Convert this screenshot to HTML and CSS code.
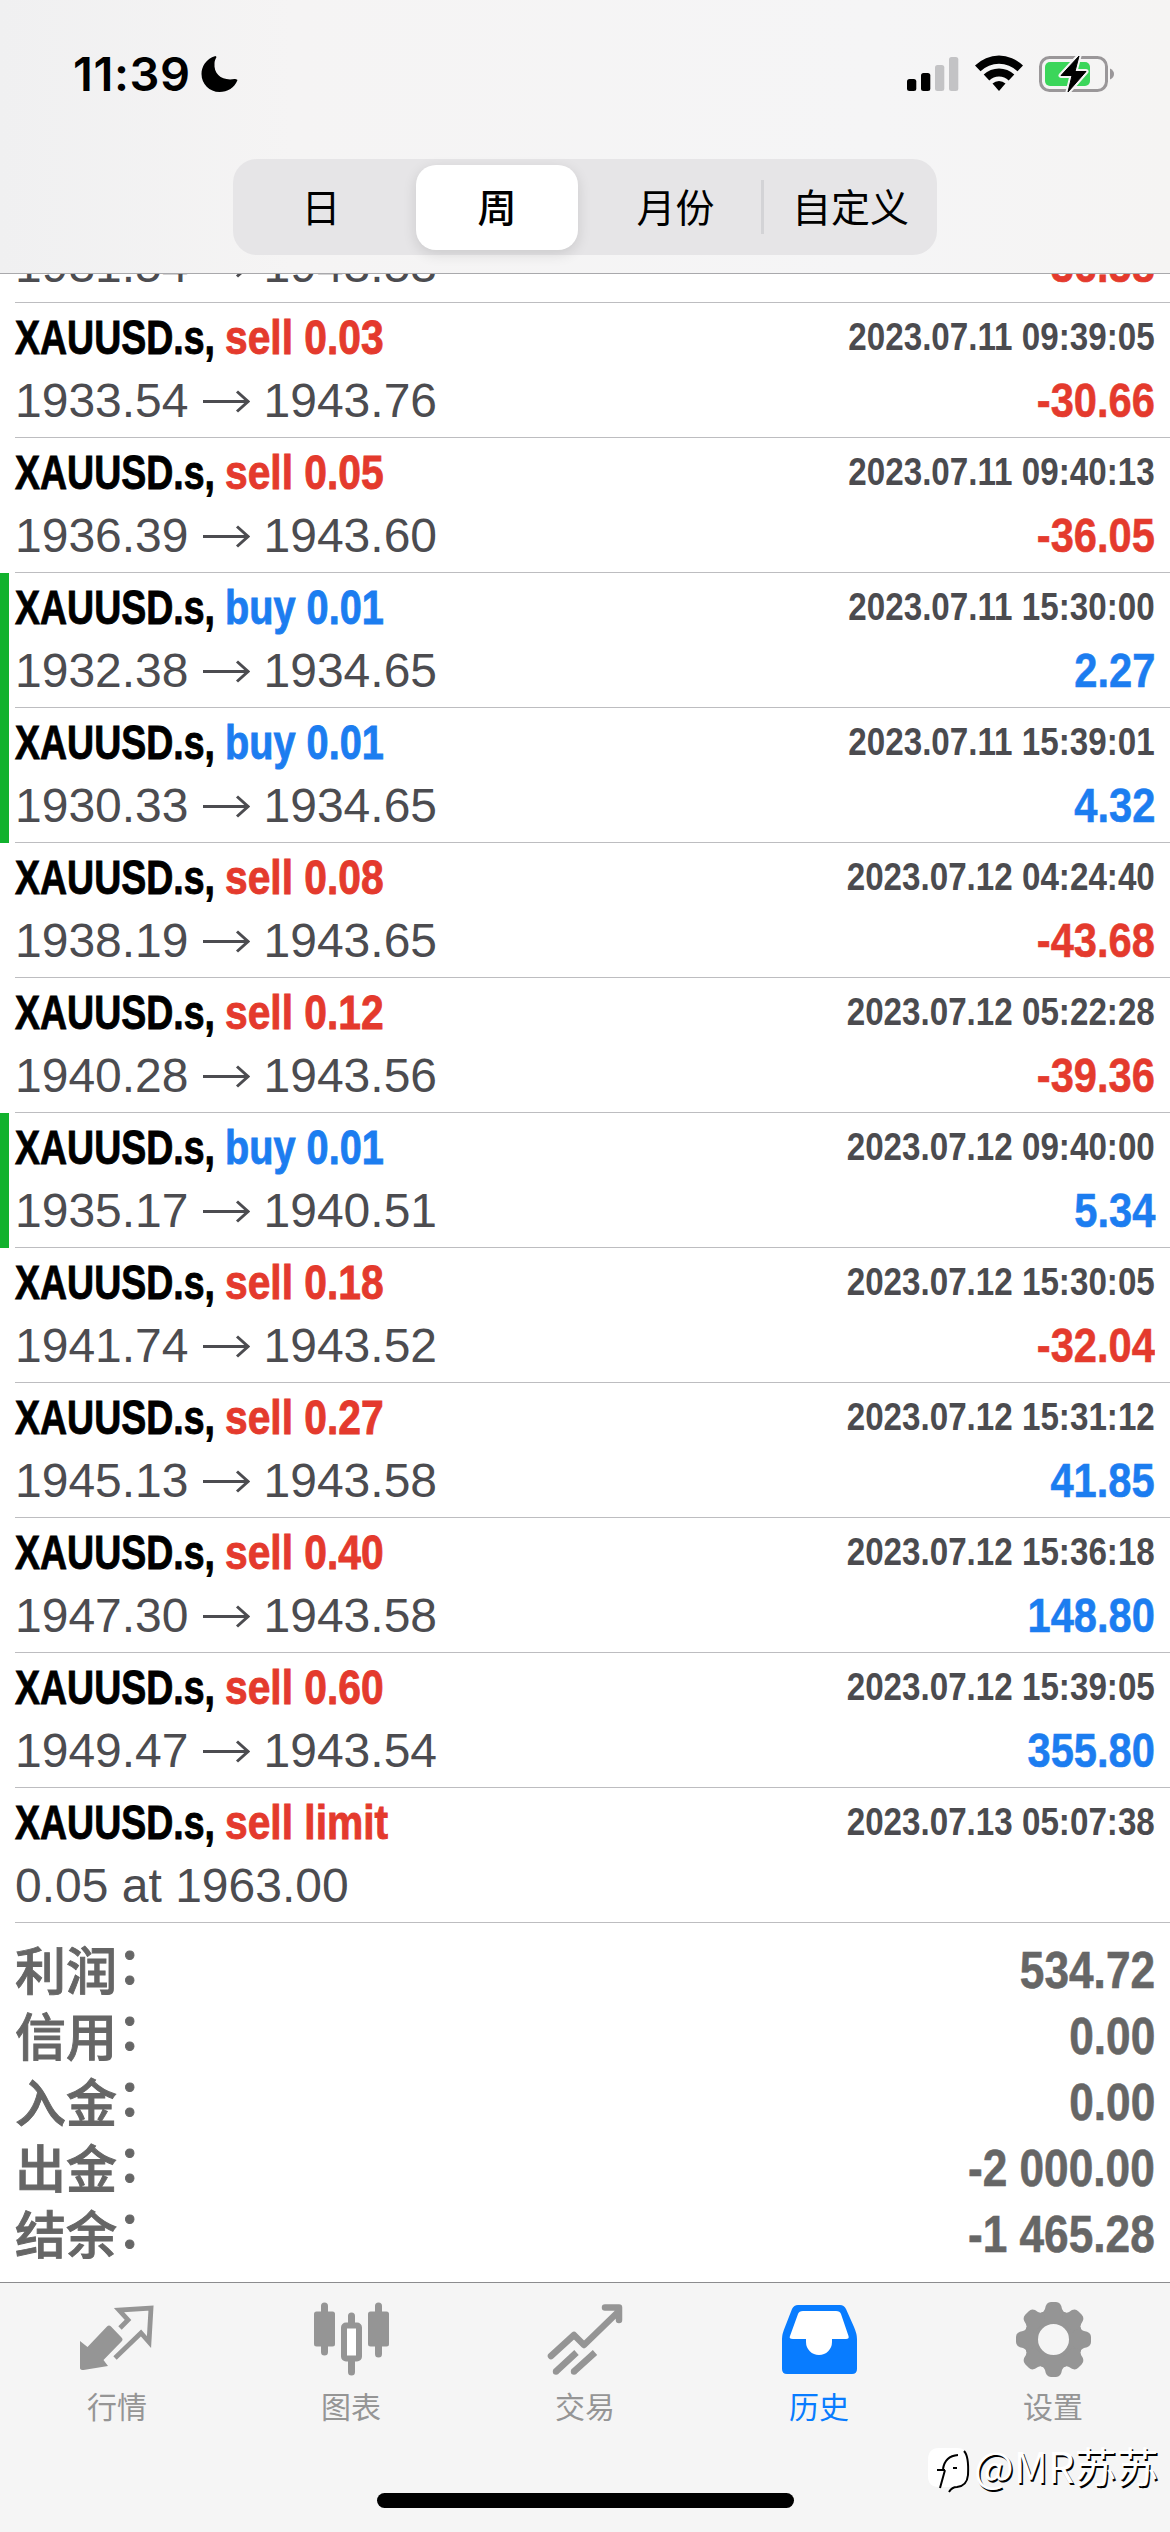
FILE: index.html
```html
<!DOCTYPE html>
<html lang="zh-CN">
<head>
<meta charset="utf-8">
<title>历史</title>
<link rel="stylesheet" href="styles.css">
</head>
<body>
<div class="app">
  <header class="header">
    <div class="status">
      <div class="status-left">
        <span class="time">11:39</span>
        <svg class="moon" viewBox="0 0 36 36"><path d="M14 0C4 3 0 11 0 18c0 10 8 18 18 18 8 0 15-4 18-12-1-1-2-1-3-1-12 2-21-4-20-16 0-2 1-4 2-6z"/></svg>
      </div>
      <div class="status-right">
        <svg class="signal" viewBox="0 0 52 36"><rect x="0" y="23" width="9.3" height="12" rx="2.5"/><rect x="14" y="17" width="9.3" height="18" rx="2.5"/><g fill="#c3c3c5"><rect x="28" y="9" width="9.3" height="26" rx="2.5"/><rect x="42" y="1" width="9.3" height="34" rx="2.5"/></g></svg>
        <svg class="wifi" viewBox="0 0 48 36"><path d="M0 10.5a34 34 0 0 1 48 0l-5.5 5.8a26.500 26.500 0 0 0-37 0z"/><path d="M8.700 19.600a22 22 0 0 1 30.600 0l-5.600 5.800a14 14 0 0 0-19.400 0z"/><path d="M17.500 28.500a9.500 9.500 0 0 1 13 0L24 36z"/></svg>
        <svg class="battery" viewBox="0 0 76 38"><rect x="1.500" y="2.500" width="66" height="33" rx="9" fill="none" stroke="#9a9799" stroke-width="3"/><path d="M71 13.500q4 2 4 5.500t-4 5.500z" fill="#9a9799"/><rect x="6" y="7" width="45" height="24" rx="5" fill="#3bd65a"/><path d="M40 1 22 20.500h11L29 37l18-20.500H36z" stroke="#f5f5f5" stroke-width="5" stroke-linejoin="round" fill="#f5f5f5"/><path d="M40 1 22 20.500h11L29 37l18-20.500H36z" stroke="#000" stroke-width="1" stroke-linejoin="round"/></svg>
      </div>
    </div>
    <nav class="segments">
      <span class="segment">日</span>
      <span class="segment selected">周</span>
      <span class="segment month">月份</span>
      <span class="segment divided">自定义</span>
    </nav>
  </header>
  <main class="history" id="history"></main>
  <footer class="tabbar">
    <nav class="tabs">
      <a class="tab"><svg viewBox="0 0 76 76"><path d="M1 37 8.500 43 28 22.500q2-2 4 0l10.500 11q2 2 0 4L24.500 56l4.500 6-24.500 4Q1 66 1 64z"/><path d="m41 24 8-8-9-10 32-2-2 34-8-9-26 25" fill="none" stroke="currentColor" stroke-width="4.800"/></svg><span>行情</span></a>
      <a class="tab"><svg viewBox="0 0 76 76"><g stroke="currentColor" stroke-width="7" stroke-linecap="round"><path d="M11.500 2v46M65.500 2v48M38.500 12v14M38.500 56v12"/></g><rect x="1" y="7.500" width="21" height="35" rx="2.500"/><rect x="55" y="7.500" width="21" height="35" rx="2.500"/><rect x="31" y="21.500" width="15" height="33" rx="2" fill="#fff" stroke="currentColor" stroke-width="6"/></svg><span>图表</span></a>
      <a class="tab"><svg viewBox="0 0 76 76"><path d="m4 52 23-21 10 10L70 9M58 3.500h14V16" fill="none" stroke="currentColor" stroke-width="6.500" stroke-linecap="round" stroke-linejoin="round"/><path d="m9.500 67 20-18.500M27.500 67 48 48.500" fill="none" stroke="currentColor" stroke-width="6.500"/><circle cx="9" cy="67.500" r="3.200"/><circle cx="27" cy="67.500" r="3.200"/></svg><span>交易</span></a>
      <a class="tab active"><svg viewBox="0 0 76 76"><path d="M17 1h42q4 0 6 4l8 18q3 7 3 12v30q0 5-5 5H6q-5 0-5-5V35q0-5 3-12l7-18q2-4 6-4z"/><path d="M22 7h33q4 0 5 3l7.500 22q1 3-2.500 3H51v3a13 13 0 0 1-26 0v-3H12q-4.500 0-3-3l8-22q1-3 5-3z" fill="#fff"/></svg><span>历史</span></a>
      <a class="tab"><svg viewBox="0 0 76 76"><circle cx="38.500" cy="35.500" r="22.500" fill="none" stroke="currentColor" stroke-width="14"/><g id="teeth"></g></svg><span>设置</span></a>
    </nav>
    <div class="home"></div>
    <div class="watermark"><svg viewBox="0 0 44 48"><path d="M12 2h18q11 0 11 12v16q0 11-10 11l-8 5 2-5H12Q1 41 1 30V14Q1 2 12 2z" fill="#fff"/><path d="M37 5q5 5 4 24-1 11-11 12-5 0-8 5M13 42l5-18M10 24h8M16 23q2-13 15-14M26 22h4" fill="none" stroke="#000" stroke-width="2"/></svg><span>@MR苏苏</span></div>
  </footer>
</div>
<script src="app.js"></script>
</body>
</html>
```
FILE: styles.css
```css
* { box-sizing: border-box; }
body { margin: 0; background: #fff; font-family: "Liberation Sans", "Noto Sans CJK SC", sans-serif; }
.app { width: 1170px; height: 2532px; display: flex; flex-direction: column; overflow: hidden; }

.header { height: 274px; flex: none; background: linear-gradient(90deg, #f0f0f1, #f5f4f4 25%, #f5f5f6 75%, #f5f4f3); border-bottom: 1px solid #a9a9ac; display: flex; flex-direction: column; align-items: center; }
.status { width: 100%; height: 159px; padding: 55px 55px 0 73px; display: flex; justify-content: space-between; }
.status-left { display: flex; gap: 11px; height: 37px; align-items: center; }
.time { width: 117px; font: 600 47px/37px Inter, sans-serif; letter-spacing: 0.6px; white-space: nowrap; }
.moon { width: 37px; height: 36px; }
.status-right { display: flex; height: 37px; gap: 16px; }
.signal { width: 52px; height: 36px; margin-top: 1px; }
.wifi { width: 48px; height: 36px; }
.battery { width: 76px; height: 38px; }
.segments { width: 704px; height: 96px; border-radius: 24px; background: #e6e5e7; display: grid; grid-template-columns: repeat(4, 1fr); align-items: center; }
.segment { height: 85px; margin: 0 7px; padding-bottom: 4px; display: flex; align-items: center; justify-content: center; font: 400 39px/81px "Noto Sans CJK SC", sans-serif; white-space: nowrap; }
.month { padding-left: 5px; }
.selected { background: #fff; border-radius: 20px; font-weight: 500; box-shadow: 0 4px 14px rgba(0, 0, 0, .12); }
.divided { margin: 0; height: 54px; border-left: 3px solid #d3d3d6; }

.history { flex: 1; min-height: 0; overflow: hidden; display: flex; flex-direction: column; justify-content: flex-end; }
.deal { flex: none; height: 135px; position: relative; padding: 9px 15px 0 15px; }
.deal::after { content: ""; position: absolute; left: 15px; right: 0; bottom: 0; height: 1px; background: #bdbdc0; }
.closed-tp::before { content: ""; position: absolute; left: 0; top: 0; bottom: 0; width: 9px; background: #12b22e; }
.line { display: flex; justify-content: space-between; height: 63px; line-height: 50px; white-space: nowrap; }
.title { display: flex; font-weight: 700; font-size: 49px; line-height: 51px; -webkit-text-stroke: .9px currentColor; }
.symbol { width: 210px; }
.symbol span, .action span { display: inline-block; transform-origin: 0 50%; }
.symbol span { transform: scaleX(.765); }
.action.red span { transform: scaleX(.832); }
.action.blue span { transform: scaleX(.81); }
.date { font-size: 39.500px; line-height: 49px; font-weight: 700; color: #4b4b4f; transform: scaleX(.84); transform-origin: 100% 50%; }
.prices { display: flex; font-size: 48px; line-height: 51px; color: #4c4c50; }
.prices svg { width: 48px; height: 51px; margin: 0 14px 0 13px; }
.profit { font-size: 49px; line-height: 51px; font-weight: 700; transform: scaleX(.85); transform-origin: 100% 50%; -webkit-text-stroke: .6px currentColor; }
.red { color: #e43a2d; }
.blue { color: #1c7df0; }

.summary { flex: none; height: 359px; padding: 13px 15px 0 15px; color: #666; }
.total { display: flex; justify-content: space-between; height: 66px; line-height: 66px; font-size: 52px; white-space: nowrap; }
.label { font: 500 51px/64px "Noto Sans CJK SC", sans-serif; -webkit-text-stroke: .9px currentColor; }
.colon { display: inline-block; transform: translateY(-6px); }
.amount { font-weight: 700; line-height: 69px; transform: scaleX(.85); transform-origin: 100% 50%; -webkit-text-stroke: .6px currentColor; }

.tabbar { height: 250px; flex: none; background: #f5f5f5; border-top: 1px solid #8c8c8e; position: relative; display: flex; flex-direction: column; align-items: center; }
.tabs { width: 100%; height: 210px; display: grid; grid-template-columns: repeat(5, 1fr); }
.tab { padding-top: 21px; display: flex; flex-direction: column; align-items: center; color: #959595; font: 400 30px/40px "Noto Sans CJK SC", sans-serif; }
.tab svg { width: 76px; height: 76px; margin-bottom: 5px; fill: currentColor; overflow: visible; }
.active { color: #087cff; }
.home { width: 417px; height: 15px; border-radius: 8px; background: #000; }
.watermark { position: absolute; left: 927px; top: 152px; display: flex; align-items: center; height: 60px; color: #fff; font: 400 42px/60px "Noto Sans CJK SC", sans-serif; text-shadow: 1.500px 1.500px 0 #000; white-space: nowrap; }
.watermark svg { width: 44px; height: 48px; margin: 10px 3px 0 0; }
```
FILE: app.js
```js
const deals = [
  ["sell 0.03", "2023.07.11 09:35:06", "1931.54", "1943.53", "-36.58"],
  ["sell 0.03", "2023.07.11 09:39:05", "1933.54", "1943.76", "-30.66"],
  ["sell 0.05", "2023.07.11 09:40:13", "1936.39", "1943.60", "-36.05"],
  ["buy 0.01", "2023.07.11 15:30:00", "1932.38", "1934.65", "2.27"],
  ["buy 0.01", "2023.07.11 15:39:01", "1930.33", "1934.65", "4.32"],
  ["sell 0.08", "2023.07.12 04:24:40", "1938.19", "1943.65", "-43.68"],
  ["sell 0.12", "2023.07.12 05:22:28", "1940.28", "1943.56", "-39.36"],
  ["buy 0.01", "2023.07.12 09:40:00", "1935.17", "1940.51", "5.34"],
  ["sell 0.18", "2023.07.12 15:30:05", "1941.74", "1943.52", "-32.04"],
  ["sell 0.27", "2023.07.12 15:31:12", "1945.13", "1943.58", "41.85"],
  ["sell 0.40", "2023.07.12 15:36:18", "1947.30", "1943.58", "148.80"],
  ["sell 0.60", "2023.07.12 15:39:05", "1949.47", "1943.54", "355.80"],
  ["sell limit", "2023.07.13 05:07:38", "0.05 at 1963.00", null, ""]
];
const totals = [["利润", "534.72"], ["信用", "0.00"], ["入金", "0.00"], ["出金", "-2 000.00"], ["结余", "-1 465.28"]];
const arrow = '<svg viewBox="0 0 48 51"><path d="M1 26.500h45M35 16.500l11 10-11 10" fill="none" stroke="currentColor" stroke-width="3"/></svg>';

const rows = deals.map(([action, date, open, close, profit]) => {
  const buy = action.startsWith("buy");
  return `<section class="deal${buy ? " closed-tp" : ""}">
    <div class="line"><div class="title"><div class="symbol"><span>XAUUSD.s,</span></div><div class="action ${buy ? "blue" : "red"}"><span>${action}</span></div></div><div class="date">${date}</div></div>
    <div class="line"><div class="prices"><span>${open}</span>${close ? arrow + `<span>${close}</span>` : ""}</div><div class="profit ${profit[0] === "-" ? "red" : "blue"}">${profit}</div></div>
  </section>`;
}).join("");
const summary = totals.map(([k, v]) => `<div class="total"><span class="label">${k}<span class="colon">：</span></span><span class="amount">${v}</span></div>`).join("");
document.getElementById("history").innerHTML = rows + `<section class="summary">${summary}</section>`;

let teeth = "";
for (let a = 0; a < 360; a += 45) {
  teeth += `<path transform="rotate(${a} 38.5 35.5)" d="M26 9q3-1 4-4 1-7 6-7h5q5 0 6 7 1 3 4 4l-6 8H32z"/>`;
}
document.getElementById("teeth").innerHTML = teeth;
```
